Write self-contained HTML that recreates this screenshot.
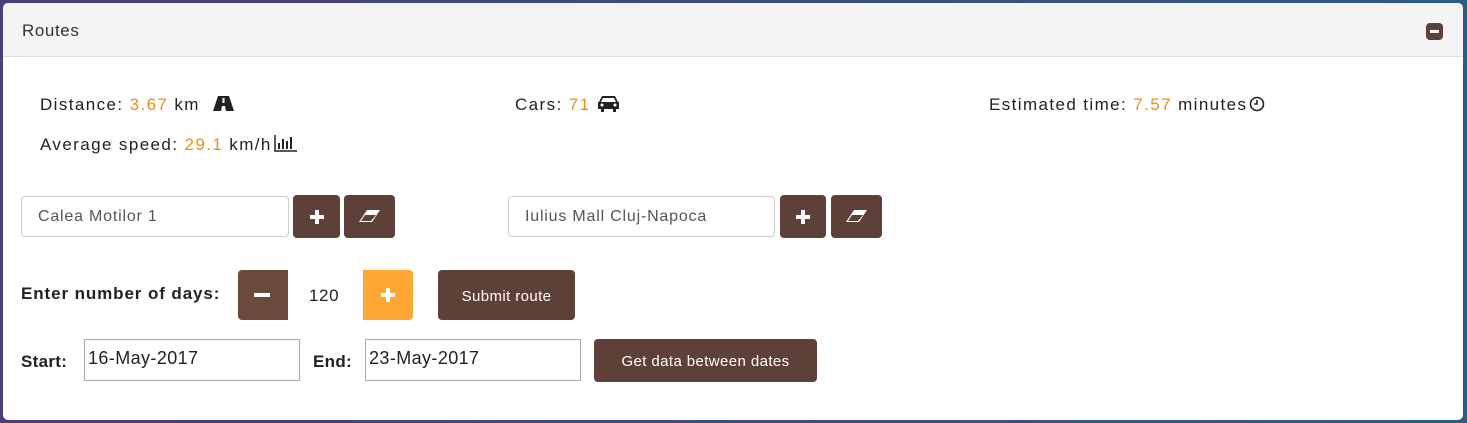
<!DOCTYPE html>
<html><head><meta charset="utf-8"><style>
html,body{margin:0;padding:0;}
body{width:1467px;height:423px;background:linear-gradient(90deg,#4a3d78,#3a5080 60%,#2e5a86);position:relative;overflow:hidden;font-family:"Liberation Sans",sans-serif;color:#222;}
.panel{position:absolute;left:3px;top:3px;width:1460px;height:417px;background:#fff;border-radius:5px;overflow:hidden;}
.hdr{height:53px;background:#f4f4f4;border-bottom:1px solid #ddd;position:relative;}
.hdr span{position:absolute;left:19px;top:18px;font-size:17px;color:#333;letter-spacing:0.6px;}
.min{position:absolute;left:1423px;top:20px;width:17px;height:17px;background:#5d4037;border-radius:4px;}
.min:after{content:"";position:absolute;left:4px;top:7px;width:9px;height:3px;background:#fff;}
.t{position:absolute;font-size:17px;color:#222;white-space:nowrap;}
.s{letter-spacing:1.4px;}
.s svg{vertical-align:-2px;}
.o{color:#f28c0f;}
.inp{position:absolute;height:41px;border:1px solid #ccc;border-radius:4px;box-sizing:border-box;font-size:16px;color:#555;padding:11px 16px;letter-spacing:0.8px;}
.btn{position:absolute;background:#5d4037;border-radius:4px;color:#fff;}
.plus:before{content:"";position:absolute;left:50%;top:50%;width:14px;height:4px;margin:-2px 0 0 -7px;background:#fff;}
.plus:after{content:"";position:absolute;left:50%;top:50%;width:4px;height:14px;margin:-7px 0 0 -2px;background:#fff;}
.btxt{position:absolute;font-size:15px;color:#fff;text-align:center;letter-spacing:0.4px;}
.di{position:absolute;height:42px;border:1px solid #aaa;box-sizing:border-box;font-size:18px;padding:8px 3px;color:#222;letter-spacing:0.4px;}
.b{font-weight:bold;font-size:17px;letter-spacing:0.3px;}
</style></head><body>
<div class="panel">
<div class="hdr"><span>Routes</span><div class="min"></div></div>
</div>
<div class="t s" style="left:40px;top:95px">Distance: <span class="o">3.67</span> km</div>
<svg style="position:absolute;left:213px;top:96px" width="21" height="15" viewBox="0 0 21 15"><path d="M5 0h11l5 15h-8l-1-5h-3l-1 5H0z" fill="#222"/><rect x="9.5" y="2" width="2" height="5" fill="#fff"/></svg>
<div class="t s" style="left:40px;top:135px">Average speed: <span class="o">29.1</span> km/h<svg width="23" height="17" viewBox="0 0 23 17" style="margin-left:2px"><path d="M1 0v16h22" stroke="#222" stroke-width="1.5" fill="none"/><rect x="4" y="8" width="2" height="6" fill="#222"/><rect x="8" y="4" width="2" height="10" fill="#222"/><rect x="12" y="6" width="2" height="8" fill="#222"/><rect x="16" y="2" width="2" height="12" fill="#222"/></svg></div>
<div class="t s" style="left:515px;top:95px">Cars: <span class="o">71</span> <svg width="23" height="17" viewBox="0 0 23 17"><path d="M5 1h13l3 6h1v7h-3v3h-3v-3H7v3H4v-3H1V7h1z" fill="#222"/><path d="M6 3h11l2 4H4z" fill="#fff"/><circle cx="5" cy="10" r="1.5" fill="#fff"/><circle cx="18" cy="10" r="1.5" fill="#fff"/></svg></div>
<div class="t s" style="left:989px;top:95px">Estimated time: <span class="o">7.57</span> minutes<svg width="16" height="16" viewBox="0 0 16 16" style="margin-left:2px"><circle cx="8" cy="8" r="6.5" stroke="#222" stroke-width="1.6" fill="none"/><path d="M8 4v4H5" stroke="#222" stroke-width="1.6" fill="none"/></svg></div>

<div class="inp" style="left:21px;top:196px;width:268px">Calea Motilor 1</div>
<div class="btn plus" style="left:293px;top:195px;width:47px;height:43px"></div>
<div class="btn" style="left:344px;top:195px;width:51px;height:43px"><svg style="position:absolute;left:15px;top:14px" width="22" height="14" viewBox="0 0 22 14"><path d="M8 1h13l-8 12H0z" fill="#fff"/><path d="M6 6h11l-5 6H2z" fill="#5d4037"/></svg></div>
<div class="inp" style="left:508px;top:196px;width:267px">Iulius Mall Cluj-Napoca</div>
<div class="btn plus" style="left:780px;top:195px;width:46px;height:43px"></div>
<div class="btn" style="left:831px;top:195px;width:51px;height:43px"><svg style="position:absolute;left:15px;top:14px" width="22" height="14" viewBox="0 0 22 14"><path d="M8 1h13l-8 12H0z" fill="#fff"/><path d="M6 6h11l-5 6H2z" fill="#5d4037"/></svg></div>

<div class="t b" style="left:21px;top:284px;letter-spacing:0.9px">Enter number of days:</div>
<div class="btn" style="left:238px;top:270px;width:50px;height:50px;background:#694a3d;border-radius:4px 0 0 4px"><div style="position:absolute;left:16px;top:23px;width:16px;height:4px;background:#fff"></div></div>
<div class="t" style="left:309px;top:286px;letter-spacing:0.6px">120</div>
<div class="btn plus" style="left:363px;top:270px;width:50px;height:50px;background:#ffa733;border-radius:0 4px 4px 0"></div>
<div class="btn" style="left:438px;top:270px;width:137px;height:50px"><div class="btxt" style="left:0;width:137px;top:0;line-height:54px">Submit route</div></div>

<div class="t b" style="left:21px;top:352px">Start:</div>
<div class="di" style="left:84px;top:339px;width:216px">16-May-2017</div>
<div class="t b" style="left:313px;top:352px">End:</div>
<div class="di" style="left:365px;top:339px;width:216px">23-May-2017</div>
<div class="btn" style="left:594px;top:339px;width:223px;height:43px"><div class="btxt" style="left:0;width:223px;top:0;line-height:45px">Get data between dates</div></div>
</body></html>
